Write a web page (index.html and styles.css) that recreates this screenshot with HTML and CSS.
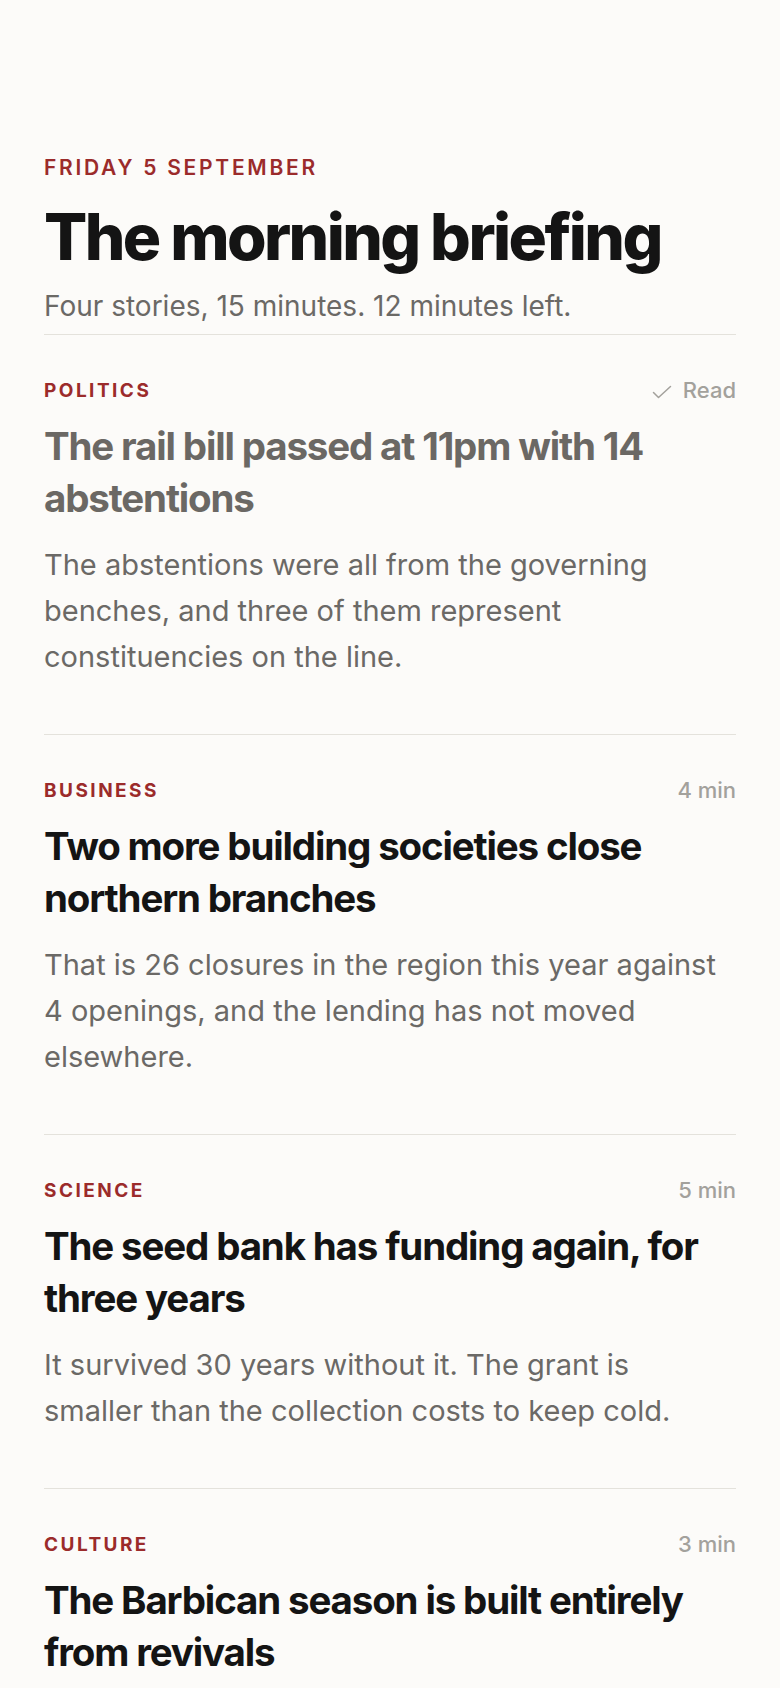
FILE: index.html
```html
<!DOCTYPE html>
<html lang="en">
<head>
<meta charset="utf-8">
<title>The morning briefing</title>
<link rel="stylesheet" href="styles.css">
</head>
<body>
<main class="page">
  <header class="masthead">
    <p class="date">Friday 5 September</p>
    <h1 class="title">The morning briefing</h1>
    <p class="summary">Four stories, 15 minutes. 12 minutes left.</p>
  </header>

  <article class="story is-read">
    <div class="meta">
      <span class="section">Politics</span>
      <span class="status"><svg class="check" viewBox="0 0 20 14" aria-hidden="true"><path d="M1.5 7.5 L6.5 12.5 L18.5 1.5" fill="none" stroke="currentColor" stroke-width="1.5" stroke-linecap="round" stroke-linejoin="round"/></svg>Read</span>
    </div>
    <h2 class="headline">The rail bill passed at 11pm with 14 abstentions</h2>
    <p class="body">The abstentions were all from the governing benches, and three of them represent constituencies on the line.</p>
  </article>

  <article class="story">
    <div class="meta">
      <span class="section">Business</span>
      <span class="status">4 min</span>
    </div>
    <h2 class="headline">Two more building societies close northern branches</h2>
    <p class="body">That is 26 closures in the region this year against 4 openings, and the lending has not moved elsewhere.</p>
  </article>

  <article class="story">
    <div class="meta">
      <span class="section">Science</span>
      <span class="status">5 min</span>
    </div>
    <h2 class="headline">The seed bank has funding again, for three years</h2>
    <p class="body">It survived 30 years without it. The grant is smaller than the collection costs to keep cold.</p>
  </article>

  <article class="story">
    <div class="meta">
      <span class="section">Culture</span>
      <span class="status">3 min</span>
    </div>
    <h2 class="headline">The Barbican season is built entirely from revivals</h2>
    <p class="body">Eleven productions, none newer than 2009. The programme notes call it a reckoning with the repertoire.</p>
  </article>
</main>
</body>
</html>
```

FILE: styles.css
```css
* { box-sizing: border-box; }

html, body {
  margin: 0;
  padding: 0;
  background: #fcfbf9;
}

body {
  font-family: Inter, "Noto Sans", "Liberation Sans", sans-serif;
  color: #141414;
}

.page {
  padding: 154px 44px 40px;
}

.masthead {
  border-bottom: 1px solid #e4e2dc;
  padding-bottom: 10px;
}

.date {
  margin: 0;
  font-size: 21px;
  line-height: 28px;
  font-weight: 600;
  letter-spacing: 0.13em;
  text-transform: uppercase;
  color: #9b2b2b;
}

.title {
  margin: 19px 0 0;
  font-size: 64px;
  line-height: 72px;
  font-weight: 800;
  letter-spacing: -0.04em;
  color: #141414;
}

.summary {
  margin: 15px 0 0;
  font-size: 28px;
  line-height: 36px;
  color: #6b6966;
}

.story {
  padding: 42px 0 54px;
  border-bottom: 1px solid #e4e2dc;
}

.meta {
  display: flex;
  justify-content: space-between;
  align-items: center;
  height: 26px;
}

.section {
  font-size: 19px;
  font-weight: 700;
  letter-spacing: 0.13em;
  text-transform: uppercase;
  color: #9b2b2b;
}

.status {
  display: inline-flex;
  align-items: center;
  gap: 11px;
  font-size: 22px;
  font-weight: 500;
  color: #a3a19c;
}

.check {
  width: 20px;
  height: 14px;
  margin-top: 4px;
}

.headline {
  margin: 17px 0 0;
  font-size: 38.5px;
  line-height: 52px;
  font-weight: 700;
  letter-spacing: -0.03em;
  color: #141414;
}

.is-read .headline {
  color: #6b6864;
}

.body {
  margin: 18px 0 0;
  font-size: 29px;
  line-height: 46px;
  color: #6b6966;
}
```
